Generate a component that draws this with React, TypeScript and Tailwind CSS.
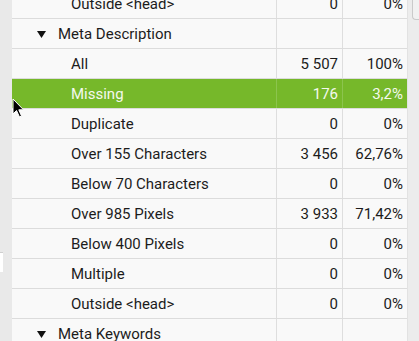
import React from 'react';

type Row = {
  label: string;
  count?: string;
  pct?: string;
  group?: boolean;
  selected?: boolean;
};

const rows: Row[] = [
  { label: 'Outside <head>', count: '0', pct: '0%' },
  { label: 'Meta Description', group: true },
  { label: 'All', count: '5 507', pct: '100%' },
  { label: 'Missing', count: '176', pct: '3,2%', selected: true },
  { label: 'Duplicate', count: '0', pct: '0%' },
  { label: 'Over 155 Characters', count: '3 456', pct: '62,76%' },
  { label: 'Below 70 Characters', count: '0', pct: '0%' },
  { label: 'Over 985 Pixels', count: '3 933', pct: '71,42%' },
  { label: 'Below 400 Pixels', count: '0', pct: '0%' },
  { label: 'Multiple', count: '0', pct: '0%' },
  { label: 'Outside <head>', count: '0', pct: '0%' },
  { label: 'Meta Keywords', group: true },
];

const Caret = () => (
  <svg width="9" height="7" viewBox="0 0 9 7" className="shrink-0">
    <path d="M0 0 H9 L4.5 7 Z" fill="#111" />
  </svg>
);

const Cursor = () => (
  <svg width="13" height="20" viewBox="0 0 13 20" className="absolute left-[12px] top-[98px]">
    <path
      d="M1 1 L1 16 L4.5 12.5 L7.5 19 L9.5 18 L6.8 11.8 L11.5 11.8 Z"
      fill="#000"
      stroke="#fff"
      strokeWidth="1"
      strokeLinejoin="round"
    />
  </svg>
);

const TableRow: React.FC<{ row: Row }> = ({ row }) => {
  const text = row.selected ? 'text-[#f4f9ee]' : 'text-[#1c1c1c]';
  const divider = row.selected ? 'border-[#8cc44e]' : 'border-[#dedede]';
  return (
    <div
      className={`flex h-[30px] shrink-0 border-b border-[#dcdcdc] ${row.selected ? 'bg-[#76b82a]' : ''}`}
    >
      <div className={`w-[264px] flex items-center pt-[1px] ${text}`}>
        {row.group ? (
          <div className="flex items-center gap-[12px] pl-[25px]">
            <Caret />
            <span>{row.label}</span>
          </div>
        ) : (
          <span className="pl-[59px]">{row.label}</span>
        )}
      </div>
      <div className={`w-[66px] border-l ${divider} flex items-center justify-end pt-[1px] pr-[4px] ${text}`}>
        {row.count}
      </div>
      <div className={`w-[65px] border-l ${divider} flex items-center justify-end pt-[1px] pr-[4px] ${text}`}>
        {row.pct}
      </div>
    </div>
  );
};

export default function App() {
  return (
    <div
      className="relative w-[419px] h-[341px] overflow-hidden flex bg-[#ebebeb] text-[15px]"
      style={{ fontFamily: 'Roboto, "Liberation Sans", sans-serif' }}
    >
      <div className="w-[12px] shrink-0 bg-[#e9e9e9] flex flex-col">
        <div className="mt-[252px] h-[20px] w-[3px] bg-white border-t border-[#cfcfcf]" />
      </div>
      <div className="w-[395px] shrink-0 bg-[#f9f9f9] flex flex-col -mt-[11px]">
        {rows.map((r, i) => (
          <TableRow key={i} row={r} />
        ))}
      </div>
      <div className="w-[12px] shrink-0 bg-[#ececec] border-l border-[#e2e2e2] flex justify-end">
        <div className="w-[7px] h-[20px] border-l border-b border-[#cacaca] rounded-bl-[4px] bg-[#f1f1f1]" />
      </div>
      <Cursor />
    </div>
  );
}
